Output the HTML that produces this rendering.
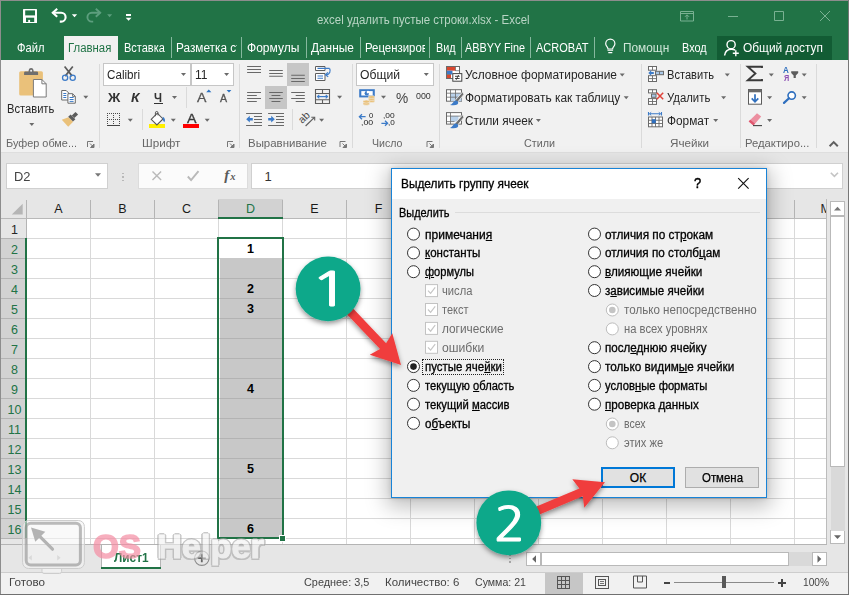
<!DOCTYPE html>
<html lang="ru"><head><meta charset="utf-8"><title>excel удалить пустые строки.xlsx - Excel</title>
<style>
*{box-sizing:border-box;margin:0;padding:0}
html,body{width:849px;height:595px;overflow:hidden;background:#e6e6e6}
body{font-family:"Liberation Sans",sans-serif;font-size:12px;color:#262626;position:relative}
.t{position:absolute;white-space:nowrap;line-height:1;display:block}
.b{position:absolute}
svg.l{position:absolute;left:0;top:0;width:849px;height:595px;overflow:visible}
u{text-decoration:underline;text-underline-offset:1px}
</style></head><body>
<div class="b" style="left:0px;top:0px;width:849px;height:60px;background:#217346;"></div>
<div class="b" style="left:64px;top:36px;width:54px;height:24px;background:#f1f1f1;"></div>
<div class="b" style="left:717px;top:36px;width:115px;height:24px;background:#125c34;"></div>
<div class="b" style="left:0px;top:60px;width:849px;height:92px;background:#f1f1f1;"></div>
<div class="b" style="left:0px;top:152px;width:849px;height:1px;background:#dedede;"></div>
<span class="t" style="left:317.00px;top:14.02px;font-size:12.5px;color:#b9d5c5;transform:scaleX(0.9164);transform-origin:0 0;">excel удалить пустые строки.xlsx - Excel</span>
<span class="t" style="left:16.80px;top:42.14px;font-size:12px;color:#fff;transform:scaleX(0.9283);transform-origin:0 0;">Файл</span>
<span class="t" style="left:68.20px;top:42.14px;font-size:12px;color:#217346;transform:scaleX(0.9477);transform-origin:0 0;">Главная</span>
<span class="t" style="left:123.60px;top:42.14px;font-size:12px;color:#fff;transform:scaleX(0.9146);transform-origin:0 0;">Вставка</span>
<span class="t" style="left:246.80px;top:42.14px;font-size:12px;color:#fff;transform:scaleX(1.0035);transform-origin:0 0;">Формулы</span>
<span class="t" style="left:311.10px;top:42.14px;font-size:12px;color:#fff;transform:scaleX(0.9871);transform-origin:0 0;">Данные</span>
<span class="t" style="left:435.50px;top:42.14px;font-size:12px;color:#fff;transform:scaleX(0.9024);transform-origin:0 0;">Вид</span>
<span class="t" style="left:465.40px;top:42.14px;font-size:12px;color:#fff;transform:scaleX(0.9025);transform-origin:0 0;">ABBYY Fine</span>
<span class="t" style="left:536.10px;top:42.14px;font-size:12px;color:#fff;transform:scaleX(0.9190);transform-origin:0 0;">ACROBAT</span>
<span class="t" style="left:682.30px;top:42.14px;font-size:12px;color:#fff;transform:scaleX(0.9096);transform-origin:0 0;">Вход</span>
<span class="t" style="left:743.40px;top:42.14px;font-size:12px;color:#fff;transform:scaleX(0.9922);transform-origin:0 0;">Общий доступ</span>
<div class="b" style="left:175.5px;top:38px;width:61px;height:20px;overflow:hidden">
<span class="t" style="left:0.00px;top:4.14px;font-size:12px;color:#fff;transform:scaleX(0.9828);transform-origin:0 0;">Разметка страницы</span>
</div>
<div class="b" style="left:364.8px;top:38px;width:60.5px;height:20px;overflow:hidden">
<span class="t" style="left:0.00px;top:4.14px;font-size:12px;color:#fff;transform:scaleX(0.9496);transform-origin:0 0;">Рецензирование</span>
</div>
<div class="b" style="left:623.2px;top:38px;width:45.5px;height:20px;overflow:hidden">
<span class="t" style="left:0.00px;top:4.14px;font-size:12px;color:#cfe6d8;transform:scaleX(0.9883);transform-origin:0 0;">Помощник</span>
</div>
<div class="b" style="left:170.5px;top:37px;width:1px;height:21px;background:#86b89e;"></div>
<div class="b" style="left:240.5px;top:37px;width:1px;height:21px;background:#86b89e;"></div>
<div class="b" style="left:305.7px;top:37px;width:1px;height:21px;background:#86b89e;"></div>
<div class="b" style="left:359.8px;top:37px;width:1px;height:21px;background:#86b89e;"></div>
<div class="b" style="left:429.3px;top:37px;width:1px;height:21px;background:#86b89e;"></div>
<div class="b" style="left:460.5px;top:37px;width:1px;height:21px;background:#86b89e;"></div>
<div class="b" style="left:530.4px;top:37px;width:1px;height:21px;background:#86b89e;"></div>
<div class="b" style="left:594.3px;top:37px;width:1px;height:21px;background:#86b89e;"></div>
<div class="b" style="left:98.5px;top:64px;width:1px;height:84px;background:#dadada;"></div>
<div class="b" style="left:238.5px;top:64px;width:1px;height:84px;background:#dadada;"></div>
<div class="b" style="left:351.5px;top:64px;width:1px;height:84px;background:#dadada;"></div>
<div class="b" style="left:438.5px;top:64px;width:1px;height:84px;background:#dadada;"></div>
<div class="b" style="left:640.8px;top:64px;width:1px;height:84px;background:#dadada;"></div>
<div class="b" style="left:739.7px;top:64px;width:1px;height:84px;background:#dadada;"></div>
<div class="b" style="left:816.3px;top:64px;width:1px;height:84px;background:#dadada;"></div>
<span class="t" style="left:5.70px;top:138.39px;font-size:11px;color:#666666;transform:scaleX(0.9898);transform-origin:0 0;">Буфер обме...</span>
<span class="t" style="left:141.80px;top:138.39px;font-size:11px;color:#666666;transform:scaleX(1.0607);transform-origin:0 0;">Шрифт</span>
<span class="t" style="left:247.70px;top:138.39px;font-size:11px;color:#666666;transform:scaleX(1.0407);transform-origin:0 0;">Выравнивание</span>
<span class="t" style="left:371.90px;top:138.39px;font-size:11px;color:#666666;transform:scaleX(0.9640);transform-origin:0 0;">Число</span>
<span class="t" style="left:523.50px;top:138.39px;font-size:11px;color:#666666;transform:scaleX(0.9778);transform-origin:0 0;">Стили</span>
<span class="t" style="left:670.40px;top:138.39px;font-size:11px;color:#666666;transform:scaleX(1.0594);transform-origin:0 0;">Ячейки</span>
<span class="t" style="left:745.40px;top:138.39px;font-size:11px;color:#666666;transform:scaleX(1.0239);transform-origin:0 0;">Редактиро...</span>
<span class="t" style="left:7.30px;top:102.64px;font-size:12px;color:#262626;transform:scaleX(0.9297);transform-origin:0 0;">Вставить</span>
<div class="b" style="left:103px;top:63px;width:88px;height:23px;background:#fff;border:1px solid #c6c6c6;"></div>
<div class="b" style="left:190.5px;top:63px;width:43px;height:23px;background:#fff;border:1px solid #c6c6c6;"></div>
<div class="b" style="left:356px;top:63px;width:78px;height:23px;background:#fff;border:1px solid #c6c6c6;"></div>
<span class="t" style="left:106.50px;top:68.72px;font-size:12.5px;color:#262626;transform:scaleX(0.9312);transform-origin:0 0;">Calibri</span>
<span class="t" style="left:194.80px;top:68.72px;font-size:12.5px;color:#262626;transform:scaleX(0.9627);transform-origin:0 0;">11</span>
<span class="t" style="left:359.50px;top:68.72px;font-size:12.5px;color:#262626;transform:scaleX(0.9723);transform-origin:0 0;">Общий</span>
<span class="t" style="left:107.70px;top:90.50px;font-size:13px;color:#333;font-weight:700;transform:scaleX(1.0468);transform-origin:0 0;">Ж</span>
<span class="t" style="left:131.00px;top:90.50px;font-size:13px;color:#333;font-weight:700;font-style:italic;transform:scaleX(1.0625);transform-origin:0 0;">К</span>
<span class="t" style="left:154.20px;top:90.50px;font-size:13px;color:#333;font-weight:700;transform:scaleX(0.8752);transform-origin:0 0;">Ч</span>
<div class="b" style="left:153.5px;top:102.5px;width:9.5px;height:1px;background:#333;"></div>
<div class="b" style="left:185.5px;top:87px;width:1px;height:21px;background:#dadada;"></div>
<div class="b" style="left:141.5px;top:109px;width:1px;height:21px;background:#dadada;"></div>
<div class="b" style="left:291.5px;top:109px;width:1px;height:21px;background:#dadada;"></div>
<span class="t" style="left:196.60px;top:90.57px;font-size:13.5px;color:#555;transform:scaleX(1.0426);transform-origin:0 0;-webkit-text-stroke:.3px #555;">A</span>
<span class="t" style="left:219.50px;top:93.11px;font-size:10.5px;color:#555;transform:scaleX(1.0120);transform-origin:0 0;-webkit-text-stroke:.3px #555;">A</span>
<span class="t" style="left:186.50px;top:111.97px;font-size:13.5px;color:#3a3a3a;transform:scaleX(1.0537);transform-origin:0 0;-webkit-text-stroke:.35px #3a3a3a;">A</span>
<div class="b" style="left:182.8px;top:124.2px;width:16.2px;height:3.6px;background:#f00;"></div>
<div class="b" style="left:149px;top:124.2px;width:16px;height:3.6px;background:#ffef00;"></div>
<span class="t" style="left:395.50px;top:89.88px;font-size:15.5px;color:#444;transform:scaleX(0.8843);transform-origin:0 0;">%</span>
<span class="t" style="left:415.60px;top:92.01px;font-size:9.2px;color:#333;transform:scaleX(0.9646);transform-origin:0 0;">000</span>
<span class="t" style="left:465.20px;top:68.84px;font-size:12px;color:#262626;transform:scaleX(0.9956);transform-origin:0 0;">Условное форматирование</span>
<span class="t" style="left:465.20px;top:91.84px;font-size:12px;color:#262626;transform:scaleX(0.9946);transform-origin:0 0;">Форматировать как таблицу</span>
<span class="t" style="left:465.20px;top:114.64px;font-size:12px;color:#262626;transform:scaleX(0.9817);transform-origin:0 0;">Стили ячеек</span>
<span class="t" style="left:667.40px;top:68.84px;font-size:12px;color:#262626;transform:scaleX(0.9238);transform-origin:0 0;">Вставить</span>
<span class="t" style="left:667.40px;top:91.84px;font-size:12px;color:#262626;transform:scaleX(0.9448);transform-origin:0 0;">Удалить</span>
<span class="t" style="left:667.40px;top:114.64px;font-size:12px;color:#262626;transform:scaleX(0.9873);transform-origin:0 0;">Формат</span>
<div class="b" style="left:287px;top:63px;width:22px;height:23px;background:#c6c6c6;"></div>
<div class="b" style="left:265px;top:86px;width:22px;height:23px;background:#c6c6c6;"></div>
<svg class="l" viewBox="0 0 849 595"><path d="M87.5 147v-5.5h5.5" fill="none" stroke="#777" stroke-width="1"/><path d="M94.0 144v3.5h-3.5z M90.0 143.5l3.5 3.5" fill="#777" stroke="#777" stroke-width="1"/><path d="M227.5 147v-5.5h5.5" fill="none" stroke="#777" stroke-width="1"/><path d="M234.0 144v3.5h-3.5z M230.0 143.5l3.5 3.5" fill="#777" stroke="#777" stroke-width="1"/><path d="M340 147v-5.5h5.5" fill="none" stroke="#777" stroke-width="1"/><path d="M346.5 144v3.5h-3.5z M342.5 143.5l3.5 3.5" fill="#777" stroke="#777" stroke-width="1"/><path d="M427 147v-5.5h5.5" fill="none" stroke="#777" stroke-width="1"/><path d="M433.5 144v3.5h-3.5z M429.5 143.5l3.5 3.5" fill="#777" stroke="#777" stroke-width="1"/><path d="M829.6 146.200l4.100-4.100 4.100 4.100" fill="none" stroke="#606060" stroke-width="2"/><path d="M29.3 123.0h5l-2.5 3z" fill="#6a6a6a"/><path d="M181.0 73.0h5l-2.5 3z" fill="#6a6a6a"/><path d="M224.1 73.0h5l-2.5 3z" fill="#6a6a6a"/><path d="M423.8 73.0h5l-2.5 3z" fill="#6a6a6a"/><path d="M172.0 96.0h5l-2.5 3z" fill="#6a6a6a"/><path d="M206.2 92.2l2.6-2.8 2.6 2.8z" fill="#2b72c2"/><path d="M226.6 90l2.4 2.6 2.4-2.6z" fill="#2b72c2"/><path d="M127.8 118.7h5l-2.5 3z" fill="#6a6a6a"/><path d="M170.8 118.7h5l-2.5 3z" fill="#6a6a6a"/><path d="M204.7 118.7h5l-2.5 3z" fill="#6a6a6a"/><path d="M381.0 95.7h5l-2.5 3z" fill="#6a6a6a"/><path d="M619.7 73.5h5l-2.5 3z" fill="#6a6a6a"/><path d="M623.7 96.3h5l-2.5 3z" fill="#6a6a6a"/><path d="M535.9 119.0h5l-2.5 3z" fill="#6a6a6a"/><path d="M724.8 73.5h5l-2.5 3z" fill="#6a6a6a"/><path d="M721.1 96.3h5l-2.5 3z" fill="#6a6a6a"/><path d="M713.2 119.0h5l-2.5 3z" fill="#6a6a6a"/><path d="M768.8 73.5h5l-2.5 3z" fill="#6a6a6a"/><path d="M801.7 73.5h5l-2.5 3z" fill="#6a6a6a"/><path d="M767.1 96.3h5l-2.5 3z" fill="#6a6a6a"/><path d="M801.7 96.3h5l-2.5 3z" fill="#6a6a6a"/><path d="M767.1 119.0h5l-2.5 3z" fill="#6a6a6a"/><path d="M337.1 95.7h5l-2.5 3z" fill="#6a6a6a"/><path d="M319.1 118.7h5l-2.5 3z" fill="#6a6a6a"/><path d="M83.3 95.8h5l-2.5 3z" fill="#6a6a6a"/></svg>
<div class="b" style="left:6px;top:163px;width:102px;height:26px;background:#fff;border:1px solid #d0d0d0;"></div>
<span class="t" style="left:13.50px;top:170.30px;font-size:13px;color:#444;transform:scaleX(0.9925);transform-origin:0 0;">D2</span>
<div class="b" style="left:122.3px;top:172.5px;width:1.6px;height:1.6px;background:#b8b8b8;"></div>
<div class="b" style="left:122.3px;top:176px;width:1.6px;height:1.6px;background:#b8b8b8;"></div>
<div class="b" style="left:122.3px;top:179.5px;width:1.6px;height:1.6px;background:#b8b8b8;"></div>
<div class="b" style="left:138px;top:163px;width:110px;height:26px;background:#fbfbfb;border:1px solid #dcdcdc;"></div>
<div class="b" style="left:251px;top:163px;width:592px;height:26px;background:#fff;border:1px solid #d0d0d0;"></div>
<span class="t" style="left:224.20px;top:168.30px;font-size:15px;color:#5a5a5a;font-weight:700;font-style:italic;font-family:'Liberation Serif',serif;">f</span>
<span class="t" style="left:230.20px;top:172.31px;font-size:10.5px;color:#5a5a5a;font-weight:700;font-style:italic;font-family:'Liberation Serif',serif;">x</span>
<span class="t" style="left:264.50px;top:170.30px;font-size:13px;color:#333;">1</span>
<svg class="l" viewBox="0 0 849 595"><path d="M95.0 173.2h6l-3.0 3.5z" fill="#777"/><path d="M152.5 171.5l8.6 8.6M161.1 171.5l-8.6 8.6" stroke="#b9b9b9" stroke-width="1.4" fill="none"/><path d="M187.8 176.5l3.3 3.6 7.4-9" stroke="#b9b9b9" stroke-width="1.9" fill="none"/><path d="M830.8 172.8l3.6 3.6 3.6-3.6" stroke="#c4c4c4" stroke-width="1.6" fill="none"/></svg>
<div class="b" style="left:0px;top:199px;width:827px;height:345px;background:#fff;"></div>
<div class="b" style="left:0px;top:199px;width:827px;height:19px;background:#e6e6e6;"></div>
<div class="b" style="left:0px;top:199px;width:26px;height:345px;background:#e6e6e6;"></div>
<span class="t" style="left:54.33px;top:202.62px;font-size:12.5px;color:#1a1a1a;">A</span>
<span class="t" style="left:118.33px;top:202.62px;font-size:12.5px;color:#1a1a1a;">B</span>
<span class="t" style="left:181.98px;top:202.62px;font-size:12.5px;color:#1a1a1a;">C</span>
<div class="b" style="left:218px;top:199px;width:65px;height:19px;background:#d2d2d2;"></div>
<span class="t" style="left:245.98px;top:202.62px;font-size:12.5px;color:#217346;">D</span>
<span class="t" style="left:310.33px;top:202.62px;font-size:12.5px;color:#1a1a1a;">E</span>
<span class="t" style="left:374.68px;top:202.62px;font-size:12.5px;color:#1a1a1a;">F</span>
<span class="t" style="left:437.63px;top:202.62px;font-size:12.5px;color:#1a1a1a;">G</span>
<span class="t" style="left:501.98px;top:202.62px;font-size:12.5px;color:#1a1a1a;">H</span>
<span class="t" style="left:568.76px;top:202.62px;font-size:12.5px;color:#1a1a1a;">I</span>
<span class="t" style="left:631.38px;top:202.62px;font-size:12.5px;color:#1a1a1a;">J</span>
<span class="t" style="left:694.33px;top:202.62px;font-size:12.5px;color:#1a1a1a;">K</span>
<span class="t" style="left:759.02px;top:202.62px;font-size:12.5px;color:#1a1a1a;">L</span>
<div class="b" style="left:815px;top:200px;width:11.5px;height:17px;overflow:hidden">
<span class="t" style="left:5.50px;top:2.62px;font-size:12.5px;color:#262626;">M</span>
</div>
<div class="b" style="left:26px;top:200px;width:1px;height:18px;background:#b4b4b4;"></div>
<div class="b" style="left:90px;top:200px;width:1px;height:18px;background:#b4b4b4;"></div>
<div class="b" style="left:154px;top:200px;width:1px;height:18px;background:#b4b4b4;"></div>
<div class="b" style="left:218px;top:200px;width:1px;height:18px;background:#b4b4b4;"></div>
<div class="b" style="left:282px;top:200px;width:1px;height:18px;background:#b4b4b4;"></div>
<div class="b" style="left:346px;top:200px;width:1px;height:18px;background:#b4b4b4;"></div>
<div class="b" style="left:410px;top:200px;width:1px;height:18px;background:#b4b4b4;"></div>
<div class="b" style="left:474px;top:200px;width:1px;height:18px;background:#b4b4b4;"></div>
<div class="b" style="left:538px;top:200px;width:1px;height:18px;background:#b4b4b4;"></div>
<div class="b" style="left:602px;top:200px;width:1px;height:18px;background:#b4b4b4;"></div>
<div class="b" style="left:666px;top:200px;width:1px;height:18px;background:#b4b4b4;"></div>
<div class="b" style="left:730px;top:200px;width:1px;height:18px;background:#b4b4b4;"></div>
<div class="b" style="left:794px;top:200px;width:1px;height:18px;background:#b4b4b4;"></div>
<div class="b" style="left:0px;top:218px;width:827px;height:1px;background:#b9b9b9;"></div>
<div class="b" style="left:90px;top:219px;width:1px;height:325px;background:#d9d9d9;"></div>
<div class="b" style="left:154px;top:219px;width:1px;height:325px;background:#d9d9d9;"></div>
<div class="b" style="left:218px;top:219px;width:1px;height:325px;background:#d9d9d9;"></div>
<div class="b" style="left:282px;top:219px;width:1px;height:325px;background:#d9d9d9;"></div>
<div class="b" style="left:346px;top:219px;width:1px;height:325px;background:#d9d9d9;"></div>
<div class="b" style="left:410px;top:219px;width:1px;height:325px;background:#d9d9d9;"></div>
<div class="b" style="left:474px;top:219px;width:1px;height:325px;background:#d9d9d9;"></div>
<div class="b" style="left:538px;top:219px;width:1px;height:325px;background:#d9d9d9;"></div>
<div class="b" style="left:602px;top:219px;width:1px;height:325px;background:#d9d9d9;"></div>
<div class="b" style="left:666px;top:219px;width:1px;height:325px;background:#d9d9d9;"></div>
<div class="b" style="left:730px;top:219px;width:1px;height:325px;background:#d9d9d9;"></div>
<div class="b" style="left:794px;top:219px;width:1px;height:325px;background:#d9d9d9;"></div>
<div class="b" style="left:27px;top:238px;width:800px;height:1px;background:#d9d9d9;"></div>
<div class="b" style="left:27px;top:258px;width:800px;height:1px;background:#d9d9d9;"></div>
<div class="b" style="left:27px;top:278px;width:800px;height:1px;background:#d9d9d9;"></div>
<div class="b" style="left:27px;top:298px;width:800px;height:1px;background:#d9d9d9;"></div>
<div class="b" style="left:27px;top:318px;width:800px;height:1px;background:#d9d9d9;"></div>
<div class="b" style="left:27px;top:338px;width:800px;height:1px;background:#d9d9d9;"></div>
<div class="b" style="left:27px;top:358px;width:800px;height:1px;background:#d9d9d9;"></div>
<div class="b" style="left:27px;top:378px;width:800px;height:1px;background:#d9d9d9;"></div>
<div class="b" style="left:27px;top:398px;width:800px;height:1px;background:#d9d9d9;"></div>
<div class="b" style="left:27px;top:418px;width:800px;height:1px;background:#d9d9d9;"></div>
<div class="b" style="left:27px;top:438px;width:800px;height:1px;background:#d9d9d9;"></div>
<div class="b" style="left:27px;top:458px;width:800px;height:1px;background:#d9d9d9;"></div>
<div class="b" style="left:27px;top:478px;width:800px;height:1px;background:#d9d9d9;"></div>
<div class="b" style="left:27px;top:498px;width:800px;height:1px;background:#d9d9d9;"></div>
<div class="b" style="left:27px;top:518px;width:800px;height:1px;background:#d9d9d9;"></div>
<div class="b" style="left:27px;top:538px;width:800px;height:1px;background:#d9d9d9;"></div>
<div class="b" style="left:826px;top:199px;width:1px;height:345px;background:#bcbcbc;"></div>
<div class="b" style="left:0px;top:238px;width:26px;height:1px;background:#b4b4b4;"></div>
<span class="t" style="left:10.92px;top:223.92px;font-size:12.5px;color:#262626;">1</span>
<div class="b" style="left:0px;top:239px;width:26px;height:19px;background:#d2d2d2;"></div>
<div class="b" style="left:0px;top:258px;width:26px;height:1px;background:#b4b4b4;"></div>
<span class="t" style="left:10.92px;top:243.92px;font-size:12.5px;color:#217346;">2</span>
<div class="b" style="left:0px;top:259px;width:26px;height:19px;background:#d2d2d2;"></div>
<div class="b" style="left:0px;top:278px;width:26px;height:1px;background:#b4b4b4;"></div>
<span class="t" style="left:10.92px;top:263.92px;font-size:12.5px;color:#217346;">3</span>
<div class="b" style="left:0px;top:279px;width:26px;height:19px;background:#d2d2d2;"></div>
<div class="b" style="left:0px;top:298px;width:26px;height:1px;background:#b4b4b4;"></div>
<span class="t" style="left:10.92px;top:283.92px;font-size:12.5px;color:#217346;">4</span>
<div class="b" style="left:0px;top:299px;width:26px;height:19px;background:#d2d2d2;"></div>
<div class="b" style="left:0px;top:318px;width:26px;height:1px;background:#b4b4b4;"></div>
<span class="t" style="left:10.92px;top:303.92px;font-size:12.5px;color:#217346;">5</span>
<div class="b" style="left:0px;top:319px;width:26px;height:19px;background:#d2d2d2;"></div>
<div class="b" style="left:0px;top:338px;width:26px;height:1px;background:#b4b4b4;"></div>
<span class="t" style="left:10.92px;top:323.92px;font-size:12.5px;color:#217346;">6</span>
<div class="b" style="left:0px;top:339px;width:26px;height:19px;background:#d2d2d2;"></div>
<div class="b" style="left:0px;top:358px;width:26px;height:1px;background:#b4b4b4;"></div>
<span class="t" style="left:10.92px;top:343.92px;font-size:12.5px;color:#217346;">7</span>
<div class="b" style="left:0px;top:359px;width:26px;height:19px;background:#d2d2d2;"></div>
<div class="b" style="left:0px;top:378px;width:26px;height:1px;background:#b4b4b4;"></div>
<span class="t" style="left:10.92px;top:363.92px;font-size:12.5px;color:#217346;">8</span>
<div class="b" style="left:0px;top:379px;width:26px;height:19px;background:#d2d2d2;"></div>
<div class="b" style="left:0px;top:398px;width:26px;height:1px;background:#b4b4b4;"></div>
<span class="t" style="left:10.92px;top:383.92px;font-size:12.5px;color:#217346;">9</span>
<div class="b" style="left:0px;top:399px;width:26px;height:19px;background:#d2d2d2;"></div>
<div class="b" style="left:0px;top:418px;width:26px;height:1px;background:#b4b4b4;"></div>
<span class="t" style="left:7.45px;top:403.92px;font-size:12.5px;color:#217346;">10</span>
<div class="b" style="left:0px;top:419px;width:26px;height:19px;background:#d2d2d2;"></div>
<div class="b" style="left:0px;top:438px;width:26px;height:1px;background:#b4b4b4;"></div>
<span class="t" style="left:7.91px;top:423.92px;font-size:12.5px;color:#217346;">11</span>
<div class="b" style="left:0px;top:439px;width:26px;height:19px;background:#d2d2d2;"></div>
<div class="b" style="left:0px;top:458px;width:26px;height:1px;background:#b4b4b4;"></div>
<span class="t" style="left:7.45px;top:443.92px;font-size:12.5px;color:#217346;">12</span>
<div class="b" style="left:0px;top:459px;width:26px;height:19px;background:#d2d2d2;"></div>
<div class="b" style="left:0px;top:478px;width:26px;height:1px;background:#b4b4b4;"></div>
<span class="t" style="left:7.45px;top:463.92px;font-size:12.5px;color:#217346;">13</span>
<div class="b" style="left:0px;top:479px;width:26px;height:19px;background:#d2d2d2;"></div>
<div class="b" style="left:0px;top:498px;width:26px;height:1px;background:#b4b4b4;"></div>
<span class="t" style="left:7.45px;top:483.92px;font-size:12.5px;color:#217346;">14</span>
<div class="b" style="left:0px;top:499px;width:26px;height:19px;background:#d2d2d2;"></div>
<div class="b" style="left:0px;top:518px;width:26px;height:1px;background:#b4b4b4;"></div>
<span class="t" style="left:7.45px;top:503.92px;font-size:12.5px;color:#217346;">15</span>
<div class="b" style="left:0px;top:519px;width:26px;height:19px;background:#d2d2d2;"></div>
<div class="b" style="left:0px;top:538px;width:26px;height:1px;background:#b4b4b4;"></div>
<span class="t" style="left:7.45px;top:523.92px;font-size:12.5px;color:#217346;">16</span>
<div class="b" style="left:0px;top:539px;width:26px;height:5px;background:#e6e6e6;"></div>
<div class="b" style="left:26px;top:219px;width:1px;height:325px;background:#b4b4b4;"></div>
<div class="b" style="left:25px;top:238px;width:2px;height:300px;background:#217346;"></div>
<div class="b" style="left:218px;top:217px;width:65px;height:2px;background:#217346;"></div>
<div class="b" style="left:220px;top:258px;width:62px;height:279px;background:#c8c8c8;"></div>
<div class="b" style="left:220px;top:278px;width:62px;height:1px;background:#b3b3b3;"></div>
<div class="b" style="left:220px;top:298px;width:62px;height:1px;background:#b3b3b3;"></div>
<div class="b" style="left:220px;top:318px;width:62px;height:1px;background:#b3b3b3;"></div>
<div class="b" style="left:220px;top:338px;width:62px;height:1px;background:#b3b3b3;"></div>
<div class="b" style="left:220px;top:358px;width:62px;height:1px;background:#b3b3b3;"></div>
<div class="b" style="left:220px;top:378px;width:62px;height:1px;background:#b3b3b3;"></div>
<div class="b" style="left:220px;top:398px;width:62px;height:1px;background:#b3b3b3;"></div>
<div class="b" style="left:220px;top:418px;width:62px;height:1px;background:#b3b3b3;"></div>
<div class="b" style="left:220px;top:438px;width:62px;height:1px;background:#b3b3b3;"></div>
<div class="b" style="left:220px;top:458px;width:62px;height:1px;background:#b3b3b3;"></div>
<div class="b" style="left:220px;top:478px;width:62px;height:1px;background:#b3b3b3;"></div>
<div class="b" style="left:220px;top:498px;width:62px;height:1px;background:#b3b3b3;"></div>
<div class="b" style="left:220px;top:518px;width:62px;height:1px;background:#b3b3b3;"></div>
<span class="t" style="left:247.02px;top:243.22px;font-size:12.5px;color:#000;font-weight:700;">1</span>
<span class="t" style="left:247.02px;top:283.22px;font-size:12.5px;color:#000;font-weight:700;">2</span>
<span class="t" style="left:247.02px;top:303.22px;font-size:12.5px;color:#000;font-weight:700;">3</span>
<span class="t" style="left:247.02px;top:383.22px;font-size:12.5px;color:#000;font-weight:700;">4</span>
<span class="t" style="left:247.02px;top:463.22px;font-size:12.5px;color:#000;font-weight:700;">5</span>
<span class="t" style="left:247.02px;top:523.22px;font-size:12.5px;color:#000;font-weight:700;">6</span>
<div class="b" style="left:217px;top:237px;width:67px;height:302px;border:2px solid #217346"></div>
<div class="b" style="left:279px;top:535px;width:7px;height:7px;background:#fff;"></div>
<div class="b" style="left:280px;top:536px;width:5px;height:5px;background:#217346;"></div>
<div class="b" style="left:827px;top:199px;width:22px;height:345px;background:#e6e6e6;"></div>
<div class="b" style="left:830px;top:201px;width:15px;height:15px;background:#fff;border:1px solid #b9b9b9;"></div>
<div class="b" style="left:830px;top:530px;width:15px;height:14px;background:#fff;border:1px solid #b9b9b9;"></div>
<div class="b" style="left:831px;top:466px;width:14px;height:65px;background:#d9d9d9;"></div>
<div class="b" style="left:830px;top:216px;width:15px;height:251px;background:#fff;border:1px solid #b9b9b9;"></div>
<svg class="l" viewBox="0 0 849 595"><path d="M22.700 203.800v10.700h-10.900z" fill="#b5b5b5"/><path d="M834 210.5l3.5-3.8 3.5 3.8z" fill="#777"/><path d="M834 535.300l3.500 3.800 3.500-3.800z" fill="#666"/></svg>
<div class="b" style="left:0px;top:544px;width:849px;height:28px;background:#e6e6e6;"></div>
<div class="b" style="left:0px;top:544px;width:827px;height:1px;background:#b4b4b4;"></div>
<div class="b" style="left:101px;top:545px;width:60px;height:23px;background:#fff;border-left:1px solid #b4b4b4;border-right:1px solid #b4b4b4;"></div>
<div class="b" style="left:101px;top:567px;width:60px;height:2px;background:#217346;"></div>
<span class="t" style="left:113.60px;top:551.54px;font-size:12px;color:#217346;font-weight:700;transform:scaleX(0.9848);transform-origin:0 0;">Лист1</span>
<div class="b" style="left:509.3px;top:554px;width:1.6px;height:1.6px;background:#a8a8a8;"></div>
<div class="b" style="left:509.3px;top:557.5px;width:1.6px;height:1.6px;background:#a8a8a8;"></div>
<div class="b" style="left:509.3px;top:561px;width:1.6px;height:1.6px;background:#a8a8a8;"></div>
<div class="b" style="left:526px;top:552px;width:15px;height:14px;background:#fff;border:1px solid #b9b9b9;"></div>
<div class="b" style="left:812px;top:552px;width:15px;height:14px;background:#fff;border:1px solid #b9b9b9;"></div>
<div class="b" style="left:789px;top:552px;width:23px;height:14px;background:#d9d9d9;"></div>
<div class="b" style="left:541px;top:552px;width:248px;height:14px;background:#fff;border:1px solid #b9b9b9;"></div>
<div class="b" style="left:0px;top:572px;width:849px;height:23px;background:#f1f1f1;"></div>
<div class="b" style="left:0px;top:572px;width:849px;height:1px;background:#cdcdcd;"></div>
<span class="t" style="left:8.60px;top:576.69px;font-size:11px;color:#444;transform:scaleX(1.0598);transform-origin:0 0;">Готово</span>
<span class="t" style="left:303.70px;top:576.69px;font-size:11px;color:#444;transform:scaleX(0.9882);transform-origin:0 0;">Среднее: 3,5</span>
<span class="t" style="left:384.70px;top:576.69px;font-size:11px;color:#444;transform:scaleX(1.0419);transform-origin:0 0;">Количество: 6</span>
<span class="t" style="left:475.30px;top:576.69px;font-size:11px;color:#444;transform:scaleX(0.9637);transform-origin:0 0;">Сумма: 21</span>
<span class="t" style="left:802.70px;top:576.69px;font-size:11px;color:#444;transform:scaleX(0.9239);transform-origin:0 0;">100%</span>
<div class="b" style="left:545px;top:573px;width:38px;height:21px;background:#c6c6c6;"></div>
<div class="b" style="left:664px;top:582px;width:6px;height:2px;background:#444;"></div>
<div class="b" style="left:674px;top:582px;width:100px;height:1px;background:#8a8a8a;"></div>
<div class="b" style="left:722px;top:576px;width:4px;height:12px;background:#595959;"></div>
<div class="b" style="left:777.7px;top:582px;width:8px;height:2px;background:#444;"></div>
<div class="b" style="left:780.7px;top:579px;width:2px;height:8px;background:#444;"></div>
<svg class="l" viewBox="0 0 849 595"><circle cx="201.800" cy="558.200" r="7.200" fill="none" stroke="#8a8a8a" stroke-width="1.100"/><path d="M197.800 558.200h8M201.800 554.200v8" stroke="#666" stroke-width="1.800"/><path d="M536 555.3l-3.8 3.7 3.8 3.7z" fill="#666"/><path d="M817.5 555.3l3.8 3.7-3.8 3.7z" fill="#666"/><rect x="557.5" y="576.5" width="12" height="12" fill="none" stroke="#555"/><path d="M561.5 576.5v12M565.5 576.5v12M557.5 580.5h12M557.5 584.5h12" stroke="#555" fill="none"/><rect x="595.5" y="576.500" width="13" height="12" fill="none" stroke="#555"/><rect x="598.5" y="579.500" width="7" height="6" fill="none" stroke="#555"/><path d="M600 581.500h4M600 583.500h4" stroke="#555" stroke-width=".8"/><path d="M633.5 588v-12h13v12zM637.5 576v6h5v-6" fill="none" stroke="#555"/></svg>
<div class="b" style="left:0px;top:0px;width:849px;height:1px;background:#8d8d8d;"></div>
<div class="b" style="left:0px;top:0px;width:1px;height:595px;background:#8d8d8d;"></div>
<div class="b" style="left:848px;top:0px;width:1px;height:595px;background:#777;"></div>
<div class="b" style="left:0px;top:594px;width:849px;height:1px;background:#707070;"></div>
<div class="b" style="left:391px;top:168px;width:376px;height:330px;box-shadow:0 5px 20px 4px rgba(0,0,0,.25),0 0 5px rgba(0,0,0,.14)"></div>
<div class="b" style="left:391px;top:168px;width:376px;height:330px;background:#f0f0f0;border:1px solid #1883d7;"></div>
<div class="b" style="left:392px;top:169px;width:374px;height:30px;background:#fff;"></div>
<span class="t" style="left:400.70px;top:178.04px;font-size:12px;color:#000;transform:scaleX(0.9861);transform-origin:0 0;-webkit-text-stroke:.3px #000;">Выделить группу ячеек</span>
<span class="t" style="left:694.20px;top:176.45px;font-size:14px;color:#000;transform:scaleX(0.9234);transform-origin:0 0;-webkit-text-stroke:.45px #000;">?</span>
<span class="t" style="left:398.70px;top:206.54px;font-size:12px;color:#000;transform:scaleX(0.9122);transform-origin:0 0;-webkit-text-stroke:.3px #000;">Выделить</span>
<div class="b" style="left:455px;top:212px;width:305px;height:1px;background:#dcdcdc;"></div>
<span class="t" style="left:424.60px;top:228.54px;font-size:12px;color:#000;transform:scaleX(1.0007);transform-origin:0 0;-webkit-text-stroke:.3px #000;">примечани<u>я</u></span>
<span class="t" style="left:424.60px;top:247.34px;font-size:12px;color:#000;transform:scaleX(0.9603);transform-origin:0 0;-webkit-text-stroke:.3px #000;"><u>к</u>онстанты</span>
<span class="t" style="left:424.60px;top:266.14px;font-size:12px;color:#000;transform:scaleX(0.9229);transform-origin:0 0;-webkit-text-stroke:.3px #000;"><u>ф</u>ормулы</span>
<span class="t" style="left:424.60px;top:361.04px;font-size:12px;color:#000;transform:scaleX(0.9556);transform-origin:0 0;-webkit-text-stroke:.3px #000;">пустые яче<u>й</u>ки</span>
<span class="t" style="left:424.60px;top:379.84px;font-size:12px;color:#000;transform:scaleX(0.9281);transform-origin:0 0;-webkit-text-stroke:.3px #000;">текущую <u>о</u>бласть</span>
<span class="t" style="left:424.60px;top:398.64px;font-size:12px;color:#000;transform:scaleX(0.9393);transform-origin:0 0;-webkit-text-stroke:.3px #000;">текущий <u>м</u>ассив</span>
<span class="t" style="left:424.60px;top:417.74px;font-size:12px;color:#000;transform:scaleX(0.9667);transform-origin:0 0;-webkit-text-stroke:.3px #000;">о<u>б</u>ъекты</span>
<span class="t" style="left:442.40px;top:285.04px;font-size:12px;color:#6d6d6d;transform:scaleX(0.9314);transform-origin:0 0;">числа</span>
<span class="t" style="left:442.40px;top:303.94px;font-size:12px;color:#6d6d6d;transform:scaleX(0.9128);transform-origin:0 0;">текст</span>
<span class="t" style="left:442.40px;top:322.84px;font-size:12px;color:#6d6d6d;transform:scaleX(0.9863);transform-origin:0 0;">логические</span>
<span class="t" style="left:442.40px;top:341.74px;font-size:12px;color:#6d6d6d;transform:scaleX(1.0133);transform-origin:0 0;">ошибки</span>
<span class="t" style="left:605.40px;top:228.54px;font-size:12px;color:#000;transform:scaleX(0.9841);transform-origin:0 0;-webkit-text-stroke:.3px #000;">отличия по ст<u>р</u>окам</span>
<span class="t" style="left:605.40px;top:247.34px;font-size:12px;color:#000;transform:scaleX(0.9754);transform-origin:0 0;-webkit-text-stroke:.3px #000;">отличия по столб<u>ц</u>ам</span>
<span class="t" style="left:605.40px;top:266.14px;font-size:12px;color:#000;transform:scaleX(0.9732);transform-origin:0 0;-webkit-text-stroke:.3px #000;"><u>в</u>лияющие ячейки</span>
<span class="t" style="left:605.40px;top:284.94px;font-size:12px;color:#000;transform:scaleX(0.9635);transform-origin:0 0;-webkit-text-stroke:.3px #000;">з<u>а</u>висимые ячейки</span>
<span class="t" style="left:605.40px;top:342.14px;font-size:12px;color:#000;transform:scaleX(0.9668);transform-origin:0 0;-webkit-text-stroke:.3px #000;">посл<u>е</u>днюю ячейку</span>
<span class="t" style="left:605.40px;top:361.04px;font-size:12px;color:#000;transform:scaleX(0.9783);transform-origin:0 0;-webkit-text-stroke:.3px #000;">только видим<u>ы</u>е ячейки</span>
<span class="t" style="left:605.40px;top:379.84px;font-size:12px;color:#000;transform:scaleX(0.9356);transform-origin:0 0;-webkit-text-stroke:.3px #000;">услов<u>н</u>ые форматы</span>
<span class="t" style="left:605.40px;top:398.64px;font-size:12px;color:#000;transform:scaleX(0.9719);transform-origin:0 0;-webkit-text-stroke:.3px #000;"><u>п</u>роверка данных</span>
<span class="t" style="left:623.50px;top:304.44px;font-size:12px;color:#6d6d6d;transform:scaleX(0.9670);transform-origin:0 0;">только непосредственно</span>
<span class="t" style="left:623.50px;top:323.34px;font-size:12px;color:#6d6d6d;transform:scaleX(0.9346);transform-origin:0 0;">на всех уровнях</span>
<span class="t" style="left:623.50px;top:418.44px;font-size:12px;color:#6d6d6d;transform:scaleX(0.8760);transform-origin:0 0;">всех</span>
<span class="t" style="left:623.50px;top:437.24px;font-size:12px;color:#6d6d6d;transform:scaleX(0.9336);transform-origin:0 0;">этих же</span>
<div class="b" style="left:422px;top:359px;width:82px;height:16px;border:1px dotted #222"></div>
<div class="b" style="left:601px;top:467px;width:74px;height:21px;background:#e1e1e1;border:2px solid #0078d7;"></div>
<div class="b" style="left:685px;top:467px;width:74px;height:21px;background:#e1e1e1;border:1px solid #adadad;"></div>
<span class="t" style="left:629.84px;top:471.84px;font-size:12px;color:#000;-webkit-text-stroke:.25px #000;">ОК</span>
<span class="t" style="left:701.50px;top:471.84px;font-size:12px;color:#000;transform:scaleX(0.9521);transform-origin:0 0;-webkit-text-stroke:.25px #000;">Отмена</span>
<svg class="l" viewBox="0 0 849 595"><path d="M738.2 178.2l10.4 10.4M748.6 178.2l-10.4 10.4" stroke="#111" stroke-width="1.15" fill="none"/><circle cx="413.5" cy="234.1" r="6" fill="#fff" stroke="#333" stroke-width="1"/><circle cx="413.5" cy="252.9" r="6" fill="#fff" stroke="#333" stroke-width="1"/><circle cx="413.5" cy="271.7" r="6" fill="#fff" stroke="#333" stroke-width="1"/><circle cx="413.5" cy="366.6" r="6" fill="#fff" stroke="#333" stroke-width="1"/><circle cx="413.5" cy="366.6" r="3.3" fill="#222"/><circle cx="413.5" cy="385.4" r="6" fill="#fff" stroke="#333" stroke-width="1"/><circle cx="413.5" cy="404.2" r="6" fill="#fff" stroke="#333" stroke-width="1"/><circle cx="413.5" cy="423.3" r="6" fill="#fff" stroke="#333" stroke-width="1"/><rect x="425.5" y="284.6" width="12" height="12" fill="#fff" stroke="#c2c2c2"/><path d="M428.0 290.6l2.6 2.8 4.6-6" stroke="#c6c6c6" stroke-width="1.2" fill="none"/><rect x="425.5" y="303.5" width="12" height="12" fill="#fff" stroke="#c2c2c2"/><path d="M428.0 309.5l2.6 2.8 4.6-6" stroke="#c6c6c6" stroke-width="1.2" fill="none"/><rect x="425.5" y="322.4" width="12" height="12" fill="#fff" stroke="#c2c2c2"/><path d="M428.0 328.4l2.6 2.8 4.6-6" stroke="#c6c6c6" stroke-width="1.2" fill="none"/><rect x="425.5" y="341.3" width="12" height="12" fill="#fff" stroke="#c2c2c2"/><path d="M428.0 347.3l2.6 2.8 4.6-6" stroke="#c6c6c6" stroke-width="1.2" fill="none"/><circle cx="594.5" cy="234.1" r="6" fill="#fff" stroke="#333" stroke-width="1"/><circle cx="594.5" cy="252.9" r="6" fill="#fff" stroke="#333" stroke-width="1"/><circle cx="594.5" cy="271.7" r="6" fill="#fff" stroke="#333" stroke-width="1"/><circle cx="594.5" cy="290.5" r="6" fill="#fff" stroke="#333" stroke-width="1"/><circle cx="594.5" cy="347.7" r="6" fill="#fff" stroke="#333" stroke-width="1"/><circle cx="594.5" cy="366.6" r="6" fill="#fff" stroke="#333" stroke-width="1"/><circle cx="594.5" cy="385.4" r="6" fill="#fff" stroke="#333" stroke-width="1"/><circle cx="594.5" cy="404.2" r="6" fill="#fff" stroke="#333" stroke-width="1"/><circle cx="612.3" cy="310" r="6" fill="#fff" stroke="#bdbdbd" stroke-width="1"/><circle cx="612.3" cy="310" r="3.3" fill="#c4c4c4"/><circle cx="612.3" cy="328.9" r="6" fill="#fff" stroke="#bdbdbd" stroke-width="1"/><circle cx="612.3" cy="424" r="6" fill="#fff" stroke="#bdbdbd" stroke-width="1"/><circle cx="612.3" cy="424" r="3.3" fill="#c4c4c4"/><circle cx="612.3" cy="442.8" r="6" fill="#fff" stroke="#bdbdbd" stroke-width="1"/></svg>
<svg class="l" viewBox="0 0 849 595"><defs><filter id="sh" x="-30%" y="-30%" width="160%" height="160%"><feDropShadow dx="0" dy="2.5" stdDeviation="2.5" flood-color="#000" flood-opacity=".42"/></filter></defs><path d="M340.0 306.9L380.0 349.1L369.8 354.7L401.0 365.0L392.3 333.3L386.1 343.3L346.0 301.1z" fill="#f03e3e" filter="url(#sh)"/><path d="M533.6 516.9L582.7 496.3L584.3 507.8L605.0 482.3L572.3 479.3L579.4 488.5L530.4 509.1z" fill="#f03e3e" filter="url(#sh)"/><circle cx="328.1" cy="288.9" r="32.4" fill="#10a88a" filter="url(#sh)"/><circle cx="508.8" cy="522.8" r="32.4" fill="#10a88a" filter="url(#sh)"/></svg>
<span class="t" style="left:310.06px;top:266.35px;font-size:47px;color:#fff;font-family:'NanumGothic','Liberation Sans',sans-serif;transform:scaleX(1.4000);transform-origin:0 0;-webkit-text-stroke:1px #fff;">1</span>
<span class="t" style="left:494.13px;top:501.05px;font-size:47px;color:#fff;font-family:'NanumGothic','Liberation Sans',sans-serif;transform:scaleX(1.1000);transform-origin:0 0;-webkit-text-stroke:1px #fff;">2</span>
<svg class="l" viewBox="0 0 849 595"><g><rect x="22.600" y="520.500" width="61.800" height="48" rx="6" fill="rgba(244,244,244,.55)" stroke="#cdcdcd" stroke-width="1"/><rect x="26.200" y="523.300" width="54.200" height="41.800" rx="4.500" fill="none" stroke="rgba(135,135,135,.55)" stroke-width="3"/><path d="M42 569v2.500q0 2 2 2h15.600q2 0 2-2v-2.500" fill="rgba(244,244,244,.7)" stroke="#cdcdcd" stroke-width="1"/><path d="M52.500 549.200L39 535.600" stroke="#b3b3b3" stroke-width="3.200" stroke-linecap="round" fill="none"/><path d="M31 527.600l14.300 4.200-10 10z" fill="#b3b3b3"/><path d="M31.800 555l-3.400 2.700 3.400 2.700zM57.200 555l3.400 2.700-3.400 2.700z" fill="#d9d9d9"/></g></svg>
<span class="t" style="left:93.30px;top:529.87px;font-size:33px;color:#f58da3;font-weight:700;transform:scaleX(1.0066);transform-origin:0 0;-webkit-text-stroke:1.6px #f58da3;opacity:.7;">OS</span>
<span class="t" style="left:156.80px;top:529.87px;font-size:33px;color:#f3f3f3;font-weight:700;transform:scaleX(1.0417);transform-origin:0 0;-webkit-text-stroke:1px #f3f3f3;text-shadow:2px 0px 0 #a6a6a6,-2px 0px 0 #a6a6a6,0px 2px 0 #a6a6a6,0px -2px 0 #a6a6a6,1.5px 1.5px 0 #a6a6a6,-1.5px 1.5px 0 #a6a6a6,1.5px -1.5px 0 #a6a6a6,-1.5px -1.5px 0 #a6a6a6;opacity:.6;">Helper</span>
<div class="b" style="left:125.7px;top:14.4px;width:5.8px;height:1.5px;background:#fff;"></div>
<svg class="l" viewBox="0 0 849 595"><rect x="23" y="9" width="14" height="14" rx=".6" fill="#fff"/><rect x="25.200" y="10.400" width="9.800" height="5" fill="#217346"/><rect x="26" y="17.700" width="8.200" height="4.300" fill="#217346"/><rect x="28.200" y="19.900" width="1.900" height="2.300" fill="#fff"/><path d="M52.6 12.8h8.6a4.4 4.4 0 0 1 0 8.8h-1.4" fill="none" stroke="#fff" stroke-width="2.100"/><path d="M57.2 8.8l-4.4 4 4.4 4" fill="none" stroke="#fff" stroke-width="2.100"/><path d="M71.8 14.3h5.4l-2.7 3z" fill="#fff"/><path d="M100.4 12.8h-8.6a4.4 4.4 0 0 0 0 8.8h1.4" fill="none" stroke="#5d9e7e" stroke-width="1.9"/><path d="M95.8 8.8l4.4 4-4.4 4" fill="none" stroke="#5d9e7e" stroke-width="1.9"/><path d="M107.1 14.3h5l-2.5 3z" fill="#5d9e7e"/><path d="M125.7 17.7h5.8l-2.9 3z" fill="#fff"/><path d="M680.5 11.5h13v9.5h-13zM680.5 13.5h13" fill="none" stroke="#79b192" stroke-width="1"/><path d="M687 19.5v-4.5M685 16.8l2-2 2 2" fill="none" stroke="#79b192" stroke-width="1"/><path d="M728 16.5h10" stroke="#79b192" stroke-width="1"/><path d="M774.5 11.5h9v9h-9z" fill="none" stroke="#79b192" stroke-width="1"/><path d="M820 11l10 10M830 11l-10 10" stroke="#79b192" stroke-width="1"/><path d="M607.5 50.2h5.6M608.3 52.6h4" stroke="#fff" stroke-width="1.1"/><path d="M608 49c0-2-2.3-2.8-2.3-5.3a4.6 4.6 0 0 1 9.2 0c0 2.500-2.300 3.300-2.300 5.300z" fill="none" stroke="#fff" stroke-width="1.2"/><circle cx="731.1" cy="44.700" r="4.100" fill="none" stroke="#fff" stroke-width="1.400"/><path d="M724.6 55.5c.4-4.600 3.400-6.300 7-6.300 1.300 0 2.500.3 3.500.8" fill="none" stroke="#fff" stroke-width="1.5"/><path d="M732.8 53.2h6M735.8 50.2v6" stroke="#fff" stroke-width="1.4"/></svg>
<svg class="l" viewBox="0 0 849 595"><rect x="19.2" y="71.2" width="23.7" height="24.3" rx="1.6" fill="#eac17a"/><path d="M24.100 75v-2.300q0-1.200 1.200-1.200h3.200q.2-3.400 2.600-3.400t2.600 3.400h3.200q1.200 0 1.200 1.200v2.300z" fill="#6e6e6e"/><circle cx="31.100" cy="70.800" r="1" fill="#f1f1f1"/><path d="M33.400 79.500h8.500l4.300 4.300v13.200h-12.800z" fill="#fff" stroke="#7a7a7a" stroke-width="1"/><path d="M41.900 79.500v4.300h4.300" fill="none" stroke="#7a7a7a" stroke-width="1"/><path d="M64.600 66.500l7.600 9.600M72.800 66.500l-7.600 9.600" stroke="#5c5c5c" stroke-width="1.7" fill="none"/><circle cx="65.100" cy="77.800" r="2.600" fill="none" stroke="#3c7bc8" stroke-width="1.300"/><circle cx="72.700" cy="77.800" r="2.600" fill="none" stroke="#3c7bc8" stroke-width="1.300"/><path d="M61.700 90.500h4.500l2.500 2.500v7h-7z" fill="#fff" stroke="#6a6a6a"/><path d="M63.300 93.500h3M63.300 95.500h3M63.300 97.500h3" stroke="#3c7bc8"/><path d="M67.900 93.700h4.700l2.700 2.700v6.800h-7.400z" fill="#fff" stroke="#6a6a6a"/><path d="M72.600 93.700v2.700h2.700" fill="none" stroke="#6a6a6a" stroke-width=".9"/><path d="M69.600 97.500h4M69.600 99.500h4M69.600 101.400h4" stroke="#3c7bc8"/><path d="M61.800 119.700l6.600-2.500 4.700 4.600-4.900 5z" fill="#eac17a"/><path d="M68.200 116.700l2.400-2.300 4.800 4.800-2.400 2.300z" fill="#5c5c5c"/><path d="M71.800 115.400l3.700-3.500 2.600 2.600-3.700 3.500z" fill="#5c5c5c"/></svg>
<svg class="l" viewBox="0 0 849 595"><path d="M107 113.5h1M107 119.5h1M109 113.5h1M109 119.5h1M111 113.5h1M111 119.5h1M113 113.5h1M113 119.5h1M115 113.5h1M115 119.5h1M117 113.5h1M117 119.5h1M119 113.5h1M119 119.5h1M107.5 113v1M113.5 113v1M119.5 113v1M107.5 115v1M113.5 115v1M119.5 115v1M107.5 117v1M113.5 117v1M119.5 117v1M107.5 119v1M113.5 119v1M119.5 119v1M107.5 121v1M113.5 121v1M119.5 121v1M107.5 123v1M113.5 123v1M119.5 123v1" stroke="#4a4a4a" stroke-width="1" fill="none" shape-rendering="crispEdges"/><path d="M107 125.500h13" stroke="#444" stroke-width="1" shape-rendering="crispEdges"/><path d="M151.200 119.300l6.100-6.100 5.700 5.700-6.100 6.100z" fill="#fff" stroke="#555" stroke-width="1.100"/><path d="M155.400 116.200v-3.400a1.300 1.300 0 0 1 2.600 0v2.600" fill="none" stroke="#555" stroke-width="1"/><path d="M162.800 116.800c2.200 1.200 2.800 3.600 1.600 5.400-1.300-.9-2.200-3-1.600-5.400z" fill="#3c7bc8"/></svg>
<svg class="l" viewBox="0 0 849 595"><path d="M247.1 66.5H261M247.1 69.4H261M247.1 72.4H261" stroke="#686868" stroke-width="1.050" fill="none"/><path d="M269.2 70.4H282.8M269.2 73.4H282.8M269.2 76.3H282.8" stroke="#686868" stroke-width="1.050" fill="none"/><path d="M291.2 75.3H304.8M291.2 78.4H304.8M291.2 81.4H304.8" stroke="#686868" stroke-width="1.050" fill="none"/><path d="M247.1 92.4H261M247.1 95.4H256.8M247.1 98.5H261M247.1 101.5H256.8" stroke="#686868" stroke-width="1.050" fill="none"/><path d="M269.2 92.4H282.8M271.5 95.4H280.4M269.2 98.5H282.8M271.5 101.5H280.4" stroke="#686868" stroke-width="1.050" fill="none"/><path d="M291.2 92.4H304.8M295.7 95.4H304.8M291.2 98.5H304.8M295.7 101.5H304.8" stroke="#686868" stroke-width="1.050" fill="none"/><path d="M315.5 66.500h9.500v4h-9.500zM315.5 73.500h9.500v7h-9.500z" fill="#fff" stroke="#5e5e5e" stroke-width="1"/><path d="M317.500 68.400h12M317.500 76h5.500M317.500 78.300h5.500" stroke="#3c7bc8" stroke-width="1.100"/><path d="M329.500 68.400c1.600 2.600.2 6.200-3.400 6.400" fill="none" stroke="#3c7bc8" stroke-width="1.200"/><path d="M328 72.400l-2.600 2.400 2.800 2" fill="none" stroke="#3c7bc8" stroke-width="1.200"/><path d="M315.500 89.500h14v14h-14zM315.500 93.500h14M315.500 99.700h14M322.500 89.500v4M322.500 99.700v3.800" fill="none" stroke="#5e5e5e" stroke-width="1.100"/><path d="M317.500 96.600h10" stroke="#3c7bc8" stroke-width="1.200"/><path d="M319.300 94.800l-1.800 1.800 1.800 1.800M325.700 94.800l1.800 1.800-1.800 1.800" fill="none" stroke="#3c7bc8" stroke-width="1.100"/><path d="M246.100 113.400H262M254 116.400H262M254 119.400H262M254 122.500H262M246.100 125.500H262" stroke="#686868" stroke-width="1.050" fill="none"/><path d="M246.200 119.200l3.600-3.400v2.200h3v2.400h-3v2.200z" fill="#3c7bc8"/><path d="M268.100 113.400H284M276 116.400H284M276 119.400H284M276 122.500H284M268.100 125.500H284" stroke="#686868" stroke-width="1.050" fill="none"/><path d="M274.800 119.200l-3.600-3.400v2.200h-3v2.400h3v2.200z" fill="#3c7bc8"/><path d="M305.600 126l8.600-8.400" stroke="#5e5e5e" stroke-width="1.200"/><path d="M311.300 117.200h3.400v3.400" fill="none" stroke="#5e5e5e" stroke-width="1.100"/></svg>
<span class="t" style="left:297.7px;top:112px;font-size:10.500px;color:#4a4a4a;transform:rotate(-45deg);transform-origin:50% 50%">ab</span>
<svg class="l" viewBox="0 0 849 595"><rect x="359.200" y="89.200" width="15.600" height="8.200" fill="#3c7bc8"/><rect x="361.300" y="91.100" width="11.400" height="4.400" fill="#fff"/><circle cx="366.800" cy="93.300" r="2.200" fill="#3c7bc8"/><path d="M366.800 93.300h2.400v-2.400h-2.400z" fill="#fff"/><ellipse cx="371.600" cy="101" rx="3.300" ry="1.500" fill="#eac17a" stroke="#f1f1f1" stroke-width=".5"/><ellipse cx="371.600" cy="99" rx="3.300" ry="1.500" fill="#eac17a" stroke="#f1f1f1" stroke-width=".5"/><ellipse cx="371.600" cy="97" rx="3.300" ry="1.500" fill="#eac17a" stroke="#f1f1f1" stroke-width=".5"/><ellipse cx="366.300" cy="103.7" rx="3.300" ry="1.500" fill="#eac17a" stroke="#f1f1f1" stroke-width=".5"/><ellipse cx="366.300" cy="101.6" rx="3.300" ry="1.500" fill="#eac17a" stroke="#f1f1f1" stroke-width=".5"/><path d="M359.400 116.700h6.200M362 114.200l-2.600 2.500 2.600 2.500" fill="none" stroke="#3c7bc8" stroke-width="1.300"/><path d="M381.400 123.300h6.200M385 120.800l2.600 2.500-2.600 2.500" fill="none" stroke="#3c7bc8" stroke-width="1.300"/></svg>
<span class="t" style="left:369.00px;top:111.73px;font-size:8px;color:#222;transform:scaleX(0.9432);transform-origin:0 0;">0</span>
<span class="t" style="left:361.00px;top:119.43px;font-size:8px;color:#222;transform:scaleX(1.0966);transform-origin:0 0;">,00</span>
<span class="t" style="left:383.30px;top:111.73px;font-size:8px;color:#222;transform:scaleX(1.0517);transform-origin:0 0;">,00</span>
<span class="t" style="left:388.20px;top:119.43px;font-size:8px;color:#222;transform:scaleX(1.0192);transform-origin:0 0;">,0</span>
<svg class="l" viewBox="0 0 849 595"><rect x="446.500" y="66.500" width="13" height="12" fill="#fff" stroke="#6a6a6a" stroke-width="1"/><rect x="447" y="67" width="8.500" height="3.700" fill="#d9472f"/><rect x="447" y="70.700" width="5.500" height="3.800" fill="#3c7bc8"/><rect x="447" y="74.500" width="4" height="3.500" fill="#d9472f"/><path d="M455.500 67v4M451 74.500h-4M455.500 70.700h4" stroke="#6a6a6a" stroke-width=".7" fill="none"/><rect x="452.800" y="73.600" width="9" height="7.600" fill="#fff" stroke="#444" stroke-width="1"/><path d="M455 76.300h4.600M455 78.500h4.600M458.600 75l-2.400 4.800" stroke="#333" stroke-width=".9" fill="none"/><rect x="446.500" y="89.7" width="15" height="11.500" fill="#fff" stroke="#6a6a6a" stroke-width="1"/><rect x="450.500" y="93.2" width="11" height="8" fill="#b9d1ea"/><path d="M450.500 89.7v11.500M455.500 89.7v11.500M446.500 93.2h15M446.500 97.2h15" stroke="#6a6a6a" stroke-width=".8" fill="none"/><path d="M462.800 91.7l-8 9 2.400 2 6.600-8.200z" fill="#6e6e6e" stroke="#f1f1f1" stroke-width=".8"/><path d="M450 105.0c2.500-.6 3-3.600 5-4.300 1.500-.5 3 .4 3.200 1.800.3 2-2.200 3.500-8.200 2.500z" fill="#3c7bc8"/><rect x="446.500" y="112.6" width="15" height="11.500" fill="#fff" stroke="#6a6a6a" stroke-width="1"/><rect x="450.500" y="116.1" width="8" height="5.500" fill="#b9d1ea"/><path d="M450.500 112.6v11.500M446.500 116.1h15M446.500 121.6h8" stroke="#6a6a6a" stroke-width=".8" fill="none"/><path d="M462.800 114.6l-8 9 2.400 2 6.600-8.200z" fill="#6e6e6e" stroke="#f1f1f1" stroke-width=".8"/><path d="M450 127.89999999999999c2.500-.6 3-3.600 5-4.300 1.500-.5 3 .4 3.200 1.800.3 2-2.200 3.500-8.200 2.500z" fill="#3c7bc8"/></svg>
<svg class="l" viewBox="0 0 849 595"><rect x="648.5" y="66.5" width="8" height="3.7" fill="#fff" stroke="#6a6a6a" stroke-width="1"/><path d="M652.50 66.5v3.7" stroke="#6a6a6a" stroke-width=".9" fill="none"/><rect x="655.5" y="71.3" width="8" height="3.4" fill="#a9c8e8" stroke="#6a6a6a" stroke-width="1"/><path d="M659.50 71.3v3.4" stroke="#6a6a6a" stroke-width=".9" fill="none"/><rect x="648.5" y="75.7" width="8" height="5.8" fill="#fff" stroke="#6a6a6a" stroke-width="1"/><path d="M652.50 75.7v5.8M648.5 78.60h8" stroke="#6a6a6a" stroke-width=".9" fill="none"/><path d="M648.300 73l2.900-2.700v1.700h2.600v2h-2.600v1.700z" fill="#3c7bc8"/><rect x="648.5" y="89.7" width="8" height="3.2" fill="#fff" stroke="#6a6a6a" stroke-width="1"/><path d="M652.50 89.7v3.2" stroke="#6a6a6a" stroke-width=".9" fill="none"/><rect x="651.5" y="94.1" width="4.5" height="3.2" fill="#a9c8e8" stroke="#6a6a6a" stroke-width="1"/><rect x="648.5" y="98.6" width="8" height="5.8" fill="#fff" stroke="#6a6a6a" stroke-width="1"/><path d="M652.50 98.6v5.8M648.5 101.50h8" stroke="#6a6a6a" stroke-width=".9" fill="none"/><path d="M656.800 92.700l6.400 6.600M663.200 92.700l-6.400 6.600" stroke="#e0433a" stroke-width="1.500" fill="none"/><path d="M648.500 112v3.600M661.500 112v3.600M649.500 113.800h11" stroke="#3c7bc8" stroke-width="1.100" fill="none"/><path d="M651.200 112.300l-1.700 1.500 1.700 1.500M658.800 112.300l1.700 1.500-1.700 1.500" stroke="#3c7bc8" stroke-width="1" fill="none"/><rect x="648.5" y="117" width="14" height="9.8" fill="#fff" stroke="#6a6a6a" stroke-width="1"/><path d="M652.00 117v9.8M655.50 117v9.8M659.00 117v9.8M648.5 120.27h14M648.5 123.53h14" stroke="#6a6a6a" stroke-width=".9" fill="none"/><rect x="651.800" y="119.200" width="4" height="4" fill="#2f6fbe"/></svg>
<svg class="l" viewBox="0 0 849 595"><path d="M762 68v-1.300h-14.200l7.600 6.800-7.600 6.800h14.200v-1.300" fill="none" stroke="#3a3a3a" stroke-width="1.900" stroke-linejoin="miter"/><path d="M791.200 71.200h7v1.900l-2.400 2.300v2.600h-2.200v-2.600l-2.400-2.300z" fill="#5c5c5c"/><rect x="748.500" y="89.500" width="13" height="14.700" fill="#fff" stroke="#5c5c5c" stroke-width="1"/><rect x="748.500" y="89.500" width="13" height="2.800" fill="#6a6a6a"/><path d="M755 94.300v7.200M751.700 98.400l3.300 3.400 3.300-3.400" fill="none" stroke="#2f6fbe" stroke-width="1.700"/><circle cx="791.700" cy="95.600" r="3.700" fill="#fff" stroke="#2f6fbe" stroke-width="1.600"/><path d="M789 98.300l-5 4.600" stroke="#2f6fbe" stroke-width="2.200" stroke-linecap="round"/><path d="M757 113.200l4.200 3.400-7.700 8.800-4.800-3.900z" fill="#ec8fa0"/><path d="M750.200 119.700l4.700 3.900-1.400 1.800-4.800-3.900z" fill="#e0566e"/><path d="M753 125.600h9" stroke="#444" stroke-width="1.100"/></svg>
<span class="t" style="left:783.00px;top:65.50px;font-size:8.5px;color:#2f6fbe;font-weight:700;transform:scaleX(0.9445);transform-origin:0 0;">А</span>
<span class="t" style="left:783.60px;top:74.30px;font-size:8.5px;color:#8c4fb4;font-weight:700;transform:scaleX(0.8512);transform-origin:0 0;">Я</span>
</body></html>
